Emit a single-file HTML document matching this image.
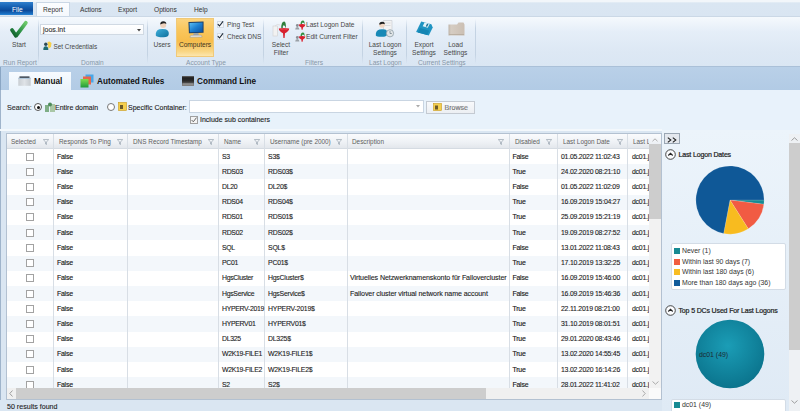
<!DOCTYPE html>
<html><head><meta charset="utf-8"><style>
*{box-sizing:border-box;margin:0;padding:0}
html,body{width:800px;height:411px;overflow:hidden;background:#dae6f2;font-family:"Liberation Sans",sans-serif;color:#222;font-size:7px}
div,span{position:absolute;white-space:nowrap}
.t{line-height:10px;height:10px}
.glabel{font-size:6.6px;color:#8797a8;line-height:9px;top:58px}
.btxt{font-size:6.6px;color:#474747;line-height:8px;text-align:center}
.sep{top:19px;width:1px;height:45px;background:linear-gradient(rgba(190,205,222,0),#c4d3e3 20%,#c4d3e3 80%,rgba(190,205,222,0))}
.mt{top:5px;font-size:6.6px;color:#333;line-height:9px}
.tt{top:77px;font-size:8.2px;font-weight:bold;color:#111;line-height:10px}
.hd{top:137px;font-size:6.4px;color:#606060;line-height:9px}
.fi{top:139px;width:6px;height:6px}
.cell{font-size:6.9px;color:#1a1a1a;line-height:10px;letter-spacing:-0.22px;-webkit-text-stroke:0.1px #1a1a1a}
.b{-webkit-text-stroke:0.15px #1a1a1a}
.st{font-size:7px;color:#1e1e1e;line-height:10px;-webkit-text-stroke:0.12px #1e1e1e}
.cb{width:8px;height:8px;border:1px solid #a2a2a2;background:#fff}
.lg{font-size:6.9px;color:#333;line-height:9px}
.sw{width:6px;height:6px}
</style></head><body>
<div style="left:0;top:0;width:800px;height:17px;background:linear-gradient(#f2f6fa,#f2f6fa 1.5px,#dae6f2 3px,#d9e5f2)"></div>
<div style="left:0;top:2px;width:33px;height:13px;background:linear-gradient(#2f7fcc,#1661b3 35%,#0b4a9a 65%,#1a6fc2 90%,#2a86d6);"></div>
<div class="mt" style="left:12px;color:#fff">File</div>
<div style="left:36px;top:2px;width:34px;height:15px;background:linear-gradient(#fbfdff,#f4f8fc);border:1px solid #cad7e5;border-bottom:none"></div>
<div class="mt" style="left:43px">Report</div>
<div class="mt" style="left:80px">Actions</div>
<div class="mt" style="left:118px">Export</div>
<div class="mt" style="left:154px">Options</div>
<div class="mt" style="left:194px">Help</div>
<div style="left:0;top:16px;width:800px;height:51px;background:linear-gradient(#f5f9fd,#e5eef8 30%,#dde8f4 70%,#dae6f3);border-top:1px solid #cbd8e6;border-bottom:1px solid #aac0d8"></div>
<div class="sep" style="left:38px"></div>
<div class="sep" style="left:147px"></div>
<div class="sep" style="left:263px"></div>
<div class="sep" style="left:362px"></div>
<div class="sep" style="left:406px"></div>
<div class="sep" style="left:475px"></div>
<div class="glabel" style="left:3px">Run Report</div>
<div class="glabel" style="left:81px">Domain</div>
<div class="glabel" style="left:186px">Account Type</div>
<div class="glabel" style="left:305px">Filters</div>
<div class="glabel" style="left:369px">Last Logon</div>
<div class="glabel" style="left:418px">Current Settings</div>
<svg style="position:absolute;left:9px;top:20px" width="20" height="19" viewBox="0 0 20 19"><defs><linearGradient id="gck" x1="0" y1="1" x2="1" y2="0"><stop offset="0" stop-color="#0f5a2a"/><stop offset="0.45" stop-color="#2a8f45"/><stop offset="1" stop-color="#6cc96a"/></linearGradient></defs><path d="M3 10 L7 15.8 L16.8 2.8" fill="none" stroke="url(#gck)" stroke-width="3.8" stroke-linecap="round" stroke-linejoin="round"/></svg>
<div class="btxt" style="left:9px;top:41px;width:20px">Start</div>
<div style="left:40px;top:23.7px;width:103.5px;height:11px;background:linear-gradient(#ffffff,#f7f9fc);border:1px solid #d0d9e3"></div>
<div class="cell" style="left:43px;top:24.5px;font-size:7px;color:#333;letter-spacing:0">joos.int</div>
<svg style="position:absolute;left:137px;top:28.5px" width="4" height="3"><path d="M0 0H4L2 2.5Z" fill="#444"/></svg>
<svg style="position:absolute;left:43px;top:41px" width="9" height="9" viewBox="0 0 9 9"><path d="M4.5 1 L6.5 0.5 L8.5 2 L8 6 L5.5 7.5Z" fill="#f6cf4a"/><circle cx="2.8" cy="3.3" r="1.7" fill="#2d4a55"/><path d="M0.3 9 Q0.2 5.3 2.8 5.3 Q5.4 5.3 5.3 9Z" fill="#1f6b70"/></svg>
<div class="btxt" style="left:53.5px;top:42.5px;text-align:left;font-size:6.4px">Set Credentials</div>
<svg style="position:absolute;left:155px;top:20px" width="15" height="18" viewBox="0 0 15 18"><defs><linearGradient id="ub" x1="0" y1="0" x2="1" y2="1"><stop offset="0" stop-color="#3fb0dc"/><stop offset="1" stop-color="#0e6f9c"/></linearGradient></defs><circle cx="8.2" cy="5" r="3" fill="#eed2bd"/><path d="M5.2 4.6 Q5.3 1.3 8.3 1.3 Q11.3 1.3 11.3 4 Q9.5 2.8 7.8 3.6 Q6.5 4.3 5.2 4.6Z" fill="#222"/><path d="M6.8 8.3 L9.6 8.3 L9 10 H7.5Z" fill="#f4f4f4"/><path d="M0.8 15.5 Q0.3 10.5 4.5 9.3 Q7.5 8.6 10.5 9.3 Q14 10.3 13.8 14 Q13.5 17.5 8 17.3 Q1.5 17.3 0.8 15.5Z" fill="url(#ub)"/></svg>
<div class="btxt" style="left:152px;top:41px;width:20px">Users</div>
<div style="left:176px;top:18px;width:38px;height:39px;background:linear-gradient(#fbd37e,#f9c65c 30%,#f7bd4c 60%,#f9d685 88%,#fce6ad);border:1px solid #f0c978"></div>
<svg style="position:absolute;left:187px;top:20.5px" width="18" height="17" viewBox="0 0 19 18"><defs><linearGradient id="scr" x1="0" y1="0" x2="1" y2="1"><stop offset="0" stop-color="#5cc0f5"/><stop offset="0.5" stop-color="#1d7fd0"/><stop offset="1" stop-color="#0b4fa0"/></linearGradient></defs><path d="M1.5 1 L17.5 0.5 L17.5 12.5 L2 13 Z" fill="#1b3d66"/><path d="M2.6 2 L16.5 1.6 L16.5 11.6 L3 12 Z" fill="url(#scr)"/><path d="M7 13 L12 12.8 L12.5 15 L6.5 15.2Z" fill="#9aa3ad"/><path d="M4 15.2 L15 15 L16 17 L3 17.2Z" fill="#e6e6e6" stroke="#8d939a" stroke-width="0.5"/></svg>
<div class="btxt" style="left:176px;top:41px;width:38px;color:#3d3420">Computers</div>
<div class="cb" style="left:216.5px;top:21px;width:7px;height:7px;border-color:#d3dbe5;background:#f4f7fa"></div>
<svg style="position:absolute;left:217px;top:21px" width="7" height="6" viewBox="0 0 7 6"><path d="M0.8 3.2 L2.5 5 L6 0.4" fill="none" stroke="#1d2a3a" stroke-width="1.1"/></svg>
<div class="btxt" style="left:227px;top:21px;text-align:left">Ping Test</div>
<div class="cb" style="left:216.5px;top:33px;width:7px;height:7px;border-color:#d3dbe5;background:#f4f7fa"></div>
<svg style="position:absolute;left:217px;top:33px" width="7" height="6" viewBox="0 0 7 6"><path d="M0.8 3.2 L2.5 5 L6 0.4" fill="none" stroke="#1d2a3a" stroke-width="1.1"/></svg>
<div class="btxt" style="left:227px;top:33px;text-align:left">Check DNS</div>
<svg style="position:absolute;left:271px;top:20px" width="20" height="19" viewBox="0 0 20 19"><rect x="2" y="6" width="4.5" height="10" fill="#f2f2f2" stroke="#cfcfcf" stroke-width="0.6"/><path d="M4 6 Q6 3.5 9 5" fill="none" stroke="#d8d8d8" stroke-width="0.8"/><path d="M10.3 8.5 Q10 2 13.2 1.6 Q15.3 2 14.8 8.5 Q14 5 12.6 5.2 Q11.5 5.8 11.8 8.5Z" fill="#2f7f3c"/><path d="M7.8 8.6 Q13 7.2 18.2 8.6 Q18 11.5 14 13.2 L13.6 18 L12.4 18 L12 13.2 Q8 11.5 7.8 8.6Z" fill="#d8202e"/><path d="M9.5 9.3 Q13 8.6 16.5 9.3" fill="none" stroke="#f06a70" stroke-width="0.6"/></svg>
<div class="btxt" style="left:270px;top:41px;width:22px">Select</div>
<div class="btxt" style="left:270px;top:48.5px;width:22px">Filter</div>
<svg style="position:absolute;left:295px;top:20px" width="11" height="10" viewBox="0 0 11 10"><circle cx="2.3" cy="5.5" r="1.4" fill="#8a8f95"/><path d="M0.2 9.6 Q0.2 7 2.3 7 Q4.4 7 4.4 9.6Z" fill="#9aa0a6"/><path d="M5.5 4.5 Q5.6 0.6 8 0.5 Q9.8 0.8 9.6 4.3 Q8.8 2.4 7.8 2.5 Q6.8 2.8 6.8 4.5Z" fill="#2f8f3f"/><path d="M3.6 4.5 Q7 3.6 10.4 4.5 Q10.2 6.6 8 7.5 L7.6 9.8 L6.6 9.8 L6.3 7.5 Q3.8 6.6 3.6 4.5Z" fill="#d8202e"/></svg>
<div class="btxt" style="left:306px;top:21px;text-align:left">Last Logon Date</div>
<svg style="position:absolute;left:295px;top:32px" width="11" height="10" viewBox="0 0 11 10"><circle cx="2.3" cy="5.5" r="1.4" fill="#8a8f95"/><path d="M0.2 9.6 Q0.2 7 2.3 7 Q4.4 7 4.4 9.6Z" fill="#9aa0a6"/><path d="M5.5 4.5 Q5.6 0.6 8 0.5 Q9.8 0.8 9.6 4.3 Q8.8 2.4 7.8 2.5 Q6.8 2.8 6.8 4.5Z" fill="#2f8f3f"/><path d="M3.6 4.5 Q7 3.6 10.4 4.5 Q10.2 6.6 8 7.5 L7.6 9.8 L6.6 9.8 L6.3 7.5 Q3.8 6.6 3.6 4.5Z" fill="#d8202e"/></svg>
<div class="btxt" style="left:306px;top:33px;text-align:left">Edit Current Filter</div>
<svg style="position:absolute;left:375px;top:19px" width="20" height="19" viewBox="0 0 20 19"><path d="M8.5 1.5 H17 V16 H8.5Z" fill="#f3f3f3" stroke="#c9cdd2" stroke-width="0.7"/><path d="M10 4 H15.5 M10 6.5 H15.5" stroke="#c9cdd2" stroke-width="0.6"/><circle cx="7" cy="6" r="2.8" fill="#f0d6c2"/><path d="M4.2 5.6 Q4.3 2.8 7.2 2.8 Q9.8 2.8 9.8 5.2 Q8.2 4.3 6.6 4.9 Q5.4 5.4 4.2 5.6Z" fill="#1f1f1f"/><path d="M0.8 16.5 Q0.5 11.5 4.5 10.4 Q7.5 9.8 10.2 10.6 Q13 11.8 12.2 15.2 Q11.5 18 6.5 17.8 Q1.2 17.8 0.8 16.5Z" fill="#1889b6"/><circle cx="15" cy="14.3" r="3.6" fill="#e2e6e8" stroke="#8fa0a8" stroke-width="0.8"/><path d="M15 12 V14.5 H16.8" fill="none" stroke="#6a7a82" stroke-width="0.7"/></svg>
<div class="btxt" style="left:366px;top:41px;width:38px">Last Logon</div>
<div class="btxt" style="left:366px;top:48.5px;width:38px">Settings</div>
<svg style="position:absolute;left:414px;top:20px" width="22" height="18" viewBox="0 0 22 18"><g transform="translate(11,8.5) rotate(16) skewX(-10) scale(0.88) translate(-7.5,-6.5)"><path d="M0 0 H12 L15 3 V13 H0Z" fill="#1f94c2"/><rect x="4" y="0" width="6" height="4.8" fill="#e4f3f9"/><rect x="7.2" y="0.8" width="1.7" height="3.2" fill="#176f93"/><rect x="2" y="7.5" width="11" height="5.5" fill="#1585b3"/></g></svg>
<div class="btxt" style="left:410px;top:41px;width:28px">Export</div>
<div class="btxt" style="left:410px;top:48.5px;width:28px">Settings</div>
<svg style="position:absolute;left:448px;top:22px" width="17" height="14" viewBox="0 0 17 14"><defs><linearGradient id="ld" x1="0" y1="0" x2="1" y2="0"><stop offset="0" stop-color="#bdb2a6"/><stop offset="0.15" stop-color="#d6cdc3"/><stop offset="1" stop-color="#cbbfb3"/></linearGradient></defs><path d="M0.5 2.5 H9 L10.5 0.5 H15.5 L16.5 2.5 V13.5 H0.5Z" fill="url(#ld)"/><path d="M1 12.5 H16" stroke="#b5a99c" stroke-width="0.8"/></svg>
<div class="btxt" style="left:442px;top:41px;width:27px">Load</div>
<div class="btxt" style="left:442px;top:48.5px;width:27px">Settings</div>
<div style="left:0;top:67px;width:800px;height:23px;background:linear-gradient(#b9d0e8,#b2cbe5)"></div>
<div style="left:0;top:67px;width:1px;height:23px;background:#8aa6c4"></div>
<div style="left:9px;top:72px;width:61.5px;height:18px;background:linear-gradient(#f7fbff,#eaf3fb)"></div>
<svg style="position:absolute;left:17.5px;top:76px" width="13" height="10" viewBox="0 0 13 10"><defs><linearGradient id="mi" x1="0" y1="0" x2="1" y2="0"><stop offset="0" stop-color="#c9ced3"/><stop offset="0.5" stop-color="#dfe3e7"/><stop offset="1" stop-color="#c6cbd0"/></linearGradient></defs><rect x="0.3" y="1.5" width="12.4" height="8.3" fill="url(#mi)"/><rect x="1.5" y="0.3" width="10" height="1.8" fill="#4d5863"/><rect x="0.3" y="2.1" width="12.4" height="0.8" fill="#a9c4dc"/></svg>
<div class="tt" style="left:34px">Manual</div>
<svg style="position:absolute;left:80px;top:74px" width="14" height="14" viewBox="0 0 14 14"><defs><linearGradient id="gc" x1="0" y1="0" x2="0" y2="1"><stop offset="0" stop-color="#7fdc4e"/><stop offset="1" stop-color="#1f9a3a"/></linearGradient></defs><rect x="5.5" y="0.5" width="8" height="8" fill="#4aa6e6"/><rect x="3" y="2.5" width="8" height="8" fill="#e8664a"/><rect x="0.5" y="5" width="8" height="8.5" fill="url(#gc)"/></svg>
<div class="tt" style="left:97px">Automated Rules</div>
<svg style="position:absolute;left:182px;top:76px" width="12" height="10" viewBox="0 0 12 10"><defs><linearGradient id="cl" x1="0" y1="0" x2="0" y2="1"><stop offset="0" stop-color="#1a1a1a"/><stop offset="0.5" stop-color="#2a2a2a"/><stop offset="1" stop-color="#8a8a8a"/></linearGradient></defs><rect x="0" y="0" width="12" height="10" fill="url(#cl)"/><rect x="0.5" y="7.5" width="11" height="1" fill="#c8c8c8" opacity="0.7"/><rect x="0" y="0" width="12" height="1.2" fill="#555"/></svg>
<div class="tt" style="left:197px">Command Line</div>
<div style="left:0;top:90px;width:800px;height:40px;background:#e8f2fb"></div>
<div style="left:0;top:90px;width:1px;height:310px;background:#9fb4cb"></div>
<div style="left:0;top:129px;width:662px;height:2px;background:#f3f8fc"></div>
<div class="st" style="left:7px;top:102.7px;color:#333;font-size:7.2px">Search:</div>
<div style="left:34px;top:103px;width:8px;height:8px;border:1px solid #555;border-radius:50%;background:#fff"></div>
<div style="left:36.5px;top:105.5px;width:3px;height:3px;border-radius:50%;background:#111"></div>
<svg style="position:absolute;left:45px;top:102px" width="10" height="10" viewBox="0 0 10 10"><rect x="0" y="3" width="4" height="7" fill="#7fae86"/><rect x="5" y="2" width="5" height="8" fill="#a9c7a6"/><circle cx="5" cy="2.5" r="2" fill="#4e8b5a"/></svg>
<div class="st" style="left:55px;top:102.5px">Entire domain</div>
<div style="left:107px;top:103px;width:8px;height:8px;border:1px solid #777;border-radius:50%;background:#fff"></div>
<svg style="position:absolute;left:118px;top:102px" width="9" height="9" viewBox="0 0 9 9"><rect x="0.5" y="0.5" width="8" height="8" fill="#f5cf4d" stroke="#c89a1d" stroke-width="0.6"/><rect x="2" y="3" width="3" height="4" fill="#6d5a2a"/></svg>
<div class="st" style="left:128px;top:102.5px">Specific Container:</div>
<div style="left:189px;top:100px;width:235px;height:13px;background:#fff;border:1px solid #c9d5e2"></div>
<svg style="position:absolute;left:416px;top:105px" width="4" height="3"><path d="M0 0H4L2 2.5Z" fill="#aaa"/></svg>
<div style="left:426px;top:100.5px;width:49px;height:13px;background:linear-gradient(#f8f9fb,#eceff3);border:1px solid #c4cad2"></div>
<svg style="position:absolute;left:433px;top:103px" width="9" height="8" viewBox="0 0 9 8"><rect x="0.5" y="0.5" width="8" height="7" fill="#f5cf4d" stroke="#c89a1d" stroke-width="0.6"/><rect x="2" y="2.5" width="3" height="4" fill="#6d5a2a"/></svg>
<div class="st" style="left:444.5px;top:102.7px;color:#8f8f8f">Browse</div>
<div style="left:190px;top:116px;width:8px;height:8px;border:1px solid #a0a0a0;background:#f4f4f4"></div>
<svg style="position:absolute;left:191px;top:117px" width="6" height="6" viewBox="0 0 6 6"><path d="M0.6 3 L2.3 4.8 L5.5 0.6" fill="none" stroke="#666" stroke-width="1"/></svg>
<div class="st" style="left:200px;top:115px">Include sub containers</div>
<div style="left:6px;top:133px;width:656px;height:267px;background:#fff;border:1px solid #b3c1d1"></div>
<div style="left:7px;top:134px;width:642px;height:15px;background:linear-gradient(#fafbfd,#eef1f5 60%,#e3e7ec);border-bottom:1px solid #d5dbe2"></div>
<div style="left:7px;top:149.00px;width:642px;height:15.22px;background:#ffffff"></div>
<div style="left:7px;top:164.22px;width:642px;height:15.22px;background:#f3f7fb"></div>
<div style="left:7px;top:179.44px;width:642px;height:15.22px;background:#ffffff"></div>
<div style="left:7px;top:194.66px;width:642px;height:15.22px;background:#f3f7fb"></div>
<div style="left:7px;top:209.88px;width:642px;height:15.22px;background:#ffffff"></div>
<div style="left:7px;top:225.10px;width:642px;height:15.22px;background:#f3f7fb"></div>
<div style="left:7px;top:240.32px;width:642px;height:15.22px;background:#ffffff"></div>
<div style="left:7px;top:255.54px;width:642px;height:15.22px;background:#f3f7fb"></div>
<div style="left:7px;top:270.76px;width:642px;height:15.22px;background:#ffffff"></div>
<div style="left:7px;top:285.98px;width:642px;height:15.22px;background:#f3f7fb"></div>
<div style="left:7px;top:301.20px;width:642px;height:15.22px;background:#ffffff"></div>
<div style="left:7px;top:316.42px;width:642px;height:15.22px;background:#f3f7fb"></div>
<div style="left:7px;top:331.64px;width:642px;height:15.22px;background:#ffffff"></div>
<div style="left:7px;top:346.86px;width:642px;height:15.22px;background:#f3f7fb"></div>
<div style="left:7px;top:362.08px;width:642px;height:15.22px;background:#ffffff"></div>
<div style="left:7px;top:377.30px;width:642px;height:15.22px;background:#f3f7fb"></div>
<div style="left:53.0px;top:134px;width:1px;height:254px;background:#d8dee5"></div>
<div style="left:127.0px;top:134px;width:1px;height:254px;background:#d8dee5"></div>
<div style="left:218.0px;top:134px;width:1px;height:254px;background:#d8dee5"></div>
<div style="left:264.0px;top:134px;width:1px;height:254px;background:#d8dee5"></div>
<div style="left:347.0px;top:134px;width:1px;height:254px;background:#d8dee5"></div>
<div style="left:509.0px;top:134px;width:1px;height:254px;background:#d8dee5"></div>
<div style="left:557.0px;top:134px;width:1px;height:254px;background:#d8dee5"></div>
<div style="left:627.0px;top:134px;width:1px;height:254px;background:#d8dee5"></div>
<div class="hd" style="left:11px">Selected</div>
<div class="hd" style="left:59px">Responds To Ping</div>
<div class="hd" style="left:133px">DNS Record Timestamp</div>
<div class="hd" style="left:224px">Name</div>
<div class="hd" style="left:270px">Username (pre 2000)</div>
<div class="hd" style="left:352px">Description</div>
<div class="hd" style="left:515px">Disabled</div>
<div class="hd" style="left:563px">Last Logon Date</div>
<div class="hd" style="left:633px">Last L</div>
<svg style="position:absolute;left:42.5px;top:139px" width="6" height="6" viewBox="0 0 6 6"><path d="M0.3 0.5 H5.7 L3.5 3 V5.5 L2.5 5 V3Z" fill="none" stroke="#9aa5b0" stroke-width="0.7"/></svg>
<svg style="position:absolute;left:116.5px;top:139px" width="6" height="6" viewBox="0 0 6 6"><path d="M0.3 0.5 H5.7 L3.5 3 V5.5 L2.5 5 V3Z" fill="none" stroke="#9aa5b0" stroke-width="0.7"/></svg>
<svg style="position:absolute;left:208px;top:139px" width="6" height="6" viewBox="0 0 6 6"><path d="M0.3 0.5 H5.7 L3.5 3 V5.5 L2.5 5 V3Z" fill="none" stroke="#9aa5b0" stroke-width="0.7"/></svg>
<svg style="position:absolute;left:253.5px;top:139px" width="6" height="6" viewBox="0 0 6 6"><path d="M0.3 0.5 H5.7 L3.5 3 V5.5 L2.5 5 V3Z" fill="none" stroke="#9aa5b0" stroke-width="0.7"/></svg>
<svg style="position:absolute;left:335.5px;top:139px" width="6" height="6" viewBox="0 0 6 6"><path d="M0.3 0.5 H5.7 L3.5 3 V5.5 L2.5 5 V3Z" fill="none" stroke="#9aa5b0" stroke-width="0.7"/></svg>
<svg style="position:absolute;left:497.5px;top:139px" width="6" height="6" viewBox="0 0 6 6"><path d="M0.3 0.5 H5.7 L3.5 3 V5.5 L2.5 5 V3Z" fill="none" stroke="#9aa5b0" stroke-width="0.7"/></svg>
<svg style="position:absolute;left:546px;top:139px" width="6" height="6" viewBox="0 0 6 6"><path d="M0.3 0.5 H5.7 L3.5 3 V5.5 L2.5 5 V3Z" fill="none" stroke="#9aa5b0" stroke-width="0.7"/></svg>
<svg style="position:absolute;left:617px;top:139px" width="6" height="6" viewBox="0 0 6 6"><path d="M0.3 0.5 H5.7 L3.5 3 V5.5 L2.5 5 V3Z" fill="none" stroke="#9aa5b0" stroke-width="0.7"/></svg>
<div class="cb" style="left:25.5px;top:152.60px"></div>
<div class="cell b" style="left:57px;top:151.60px">False</div>
<div class="cell" style="left:222px;top:151.60px;letter-spacing:-0.3px">S3</div>
<div class="cell" style="left:268px;top:151.60px">S3$</div>
<div class="cell b" style="left:512.5px;top:151.60px">False</div>
<div class="cell" style="left:561px;top:151.60px">01.05.2022 11:02:43</div>
<div style="left:629px;top:151.60px;width:20px;height:12px;overflow:hidden"><div class="cell" style="left:3px;top:0">dc01.joos.int</div></div>
<div class="cb" style="left:25.5px;top:167.82px"></div>
<div class="cell b" style="left:57px;top:166.82px">False</div>
<div class="cell" style="left:222px;top:166.82px;letter-spacing:-0.3px">RDS03</div>
<div class="cell" style="left:268px;top:166.82px">RDS03$</div>
<div class="cell b" style="left:512.5px;top:166.82px">True</div>
<div class="cell" style="left:561px;top:166.82px">24.02.2020 08:21:10</div>
<div style="left:629px;top:166.82px;width:20px;height:12px;overflow:hidden"><div class="cell" style="left:3px;top:0">dc01.joos.int</div></div>
<div class="cb" style="left:25.5px;top:183.04px"></div>
<div class="cell b" style="left:57px;top:182.04px">False</div>
<div class="cell" style="left:222px;top:182.04px;letter-spacing:-0.3px">DL20</div>
<div class="cell" style="left:268px;top:182.04px">DL20$</div>
<div class="cell b" style="left:512.5px;top:182.04px">False</div>
<div class="cell" style="left:561px;top:182.04px">01.05.2022 11:02:09</div>
<div style="left:629px;top:182.04px;width:20px;height:12px;overflow:hidden"><div class="cell" style="left:3px;top:0">dc01.joos.int</div></div>
<div class="cb" style="left:25.5px;top:198.26px"></div>
<div class="cell b" style="left:57px;top:197.26px">False</div>
<div class="cell" style="left:222px;top:197.26px;letter-spacing:-0.3px">RDS04</div>
<div class="cell" style="left:268px;top:197.26px">RDS04$</div>
<div class="cell b" style="left:512.5px;top:197.26px">True</div>
<div class="cell" style="left:561px;top:197.26px">16.09.2019 15:04:27</div>
<div style="left:629px;top:197.26px;width:20px;height:12px;overflow:hidden"><div class="cell" style="left:3px;top:0">dc01.joos.int</div></div>
<div class="cb" style="left:25.5px;top:213.48px"></div>
<div class="cell b" style="left:57px;top:212.48px">False</div>
<div class="cell" style="left:222px;top:212.48px;letter-spacing:-0.3px">RDS01</div>
<div class="cell" style="left:268px;top:212.48px">RDS01$</div>
<div class="cell b" style="left:512.5px;top:212.48px">True</div>
<div class="cell" style="left:561px;top:212.48px">25.09.2019 15:21:19</div>
<div style="left:629px;top:212.48px;width:20px;height:12px;overflow:hidden"><div class="cell" style="left:3px;top:0">dc01.joos.int</div></div>
<div class="cb" style="left:25.5px;top:228.70px"></div>
<div class="cell b" style="left:57px;top:227.70px">False</div>
<div class="cell" style="left:222px;top:227.70px;letter-spacing:-0.3px">RDS02</div>
<div class="cell" style="left:268px;top:227.70px">RDS02$</div>
<div class="cell b" style="left:512.5px;top:227.70px">True</div>
<div class="cell" style="left:561px;top:227.70px">19.09.2019 08:27:52</div>
<div style="left:629px;top:227.70px;width:20px;height:12px;overflow:hidden"><div class="cell" style="left:3px;top:0">dc01.joos.int</div></div>
<div class="cb" style="left:25.5px;top:243.92px"></div>
<div class="cell b" style="left:57px;top:242.92px">False</div>
<div class="cell" style="left:222px;top:242.92px;letter-spacing:-0.3px">SQL</div>
<div class="cell" style="left:268px;top:242.92px">SQL$</div>
<div class="cell b" style="left:512.5px;top:242.92px">False</div>
<div class="cell" style="left:561px;top:242.92px">13.01.2022 11:08:43</div>
<div style="left:629px;top:242.92px;width:20px;height:12px;overflow:hidden"><div class="cell" style="left:3px;top:0">dc01.joos.int</div></div>
<div class="cb" style="left:25.5px;top:259.14px"></div>
<div class="cell b" style="left:57px;top:258.14px">False</div>
<div class="cell" style="left:222px;top:258.14px;letter-spacing:-0.3px">PC01</div>
<div class="cell" style="left:268px;top:258.14px">PC01$</div>
<div class="cell b" style="left:512.5px;top:258.14px">True</div>
<div class="cell" style="left:561px;top:258.14px">17.10.2019 13:32:25</div>
<div style="left:629px;top:258.14px;width:20px;height:12px;overflow:hidden"><div class="cell" style="left:3px;top:0">dc01.joos.int</div></div>
<div class="cb" style="left:25.5px;top:274.36px"></div>
<div class="cell b" style="left:57px;top:273.36px">False</div>
<div class="cell" style="left:222px;top:273.36px;letter-spacing:-0.3px">HgsCluster</div>
<div class="cell" style="left:268px;top:273.36px">HgsCluster$</div>
<div class="cell" style="left:350px;top:273.36px;font-size:7.1px;letter-spacing:-0.1px">Virtuelles Netzwerknamenskonto für Failovercluster</div>
<div class="cell b" style="left:512.5px;top:273.36px">False</div>
<div class="cell" style="left:561px;top:273.36px">16.09.2019 15:46:00</div>
<div style="left:629px;top:273.36px;width:20px;height:12px;overflow:hidden"><div class="cell" style="left:3px;top:0">dc01.joos.int</div></div>
<div class="cb" style="left:25.5px;top:289.58px"></div>
<div class="cell b" style="left:57px;top:288.58px">False</div>
<div class="cell" style="left:222px;top:288.58px;letter-spacing:-0.3px">HgsService</div>
<div class="cell" style="left:268px;top:288.58px">HgsService$</div>
<div class="cell" style="left:350px;top:288.58px;font-size:7.1px;letter-spacing:-0.1px">Failover cluster virtual network name account</div>
<div class="cell b" style="left:512.5px;top:288.58px">False</div>
<div class="cell" style="left:561px;top:288.58px">16.09.2019 15:46:36</div>
<div style="left:629px;top:288.58px;width:20px;height:12px;overflow:hidden"><div class="cell" style="left:3px;top:0">dc01.joos.int</div></div>
<div class="cb" style="left:25.5px;top:304.80px"></div>
<div class="cell b" style="left:57px;top:303.80px">False</div>
<div class="cell" style="left:222px;top:303.80px;letter-spacing:-0.3px">HYPERV-2019</div>
<div class="cell" style="left:268px;top:303.80px">HYPERV-2019$</div>
<div class="cell b" style="left:512.5px;top:303.80px">True</div>
<div class="cell" style="left:561px;top:303.80px">22.11.2019 08:21:00</div>
<div style="left:629px;top:303.80px;width:20px;height:12px;overflow:hidden"><div class="cell" style="left:3px;top:0">dc01.joos.int</div></div>
<div class="cb" style="left:25.5px;top:320.02px"></div>
<div class="cell b" style="left:57px;top:319.02px">False</div>
<div class="cell" style="left:222px;top:319.02px;letter-spacing:-0.3px">HYPERV01</div>
<div class="cell" style="left:268px;top:319.02px">HYPERV01$</div>
<div class="cell b" style="left:512.5px;top:319.02px">True</div>
<div class="cell" style="left:561px;top:319.02px">31.10.2019 08:01:51</div>
<div style="left:629px;top:319.02px;width:20px;height:12px;overflow:hidden"><div class="cell" style="left:3px;top:0">dc01.joos.int</div></div>
<div class="cb" style="left:25.5px;top:335.24px"></div>
<div class="cell b" style="left:57px;top:334.24px">False</div>
<div class="cell" style="left:222px;top:334.24px;letter-spacing:-0.3px">DL325</div>
<div class="cell" style="left:268px;top:334.24px">DL325$</div>
<div class="cell b" style="left:512.5px;top:334.24px">True</div>
<div class="cell" style="left:561px;top:334.24px">29.01.2020 08:43:46</div>
<div style="left:629px;top:334.24px;width:20px;height:12px;overflow:hidden"><div class="cell" style="left:3px;top:0">dc01.joos.int</div></div>
<div class="cb" style="left:25.5px;top:350.46px"></div>
<div class="cell b" style="left:57px;top:349.46px">False</div>
<div class="cell" style="left:222px;top:349.46px;letter-spacing:-0.3px">W2K19-FILE1</div>
<div class="cell" style="left:268px;top:349.46px">W2K19-FILE1$</div>
<div class="cell b" style="left:512.5px;top:349.46px">True</div>
<div class="cell" style="left:561px;top:349.46px">13.02.2020 14:55:45</div>
<div style="left:629px;top:349.46px;width:20px;height:12px;overflow:hidden"><div class="cell" style="left:3px;top:0">dc01.joos.int</div></div>
<div class="cb" style="left:25.5px;top:365.68px"></div>
<div class="cell b" style="left:57px;top:364.68px">False</div>
<div class="cell" style="left:222px;top:364.68px;letter-spacing:-0.3px">W2K19-FILE2</div>
<div class="cell" style="left:268px;top:364.68px">W2K19-FILE2$</div>
<div class="cell b" style="left:512.5px;top:364.68px">True</div>
<div class="cell" style="left:561px;top:364.68px">13.02.2020 16:14:26</div>
<div style="left:629px;top:364.68px;width:20px;height:12px;overflow:hidden"><div class="cell" style="left:3px;top:0">dc01.joos.int</div></div>
<div class="cb" style="left:25.5px;top:380.90px"></div>
<div class="cell b" style="left:57px;top:379.90px">False</div>
<div class="cell" style="left:222px;top:379.90px;letter-spacing:-0.3px">S2</div>
<div class="cell" style="left:268px;top:379.90px">S2$</div>
<div class="cell b" style="left:512.5px;top:379.90px">False</div>
<div class="cell" style="left:561px;top:379.90px">28.01.2022 11:41:02</div>
<div style="left:629px;top:379.90px;width:20px;height:12px;overflow:hidden"><div class="cell" style="left:3px;top:0">dc01.joos.int</div></div>
<div style="left:648.5px;top:149px;width:12.5px;height:250px;background:#f2f2f2"></div>
<div style="left:648.5px;top:134px;width:12.5px;height:15px;background:linear-gradient(#fafbfd,#eef1f5 60%,#e6e9ee)"></div>
<svg style="position:absolute;left:652px;top:138px" width="6" height="4"><path d="M0.5 3.2 L3 0.8 L5.5 3.2" fill="none" stroke="#999" stroke-width="0.8"/></svg>
<div style="left:648.5px;top:144px;width:12.5px;height:75px;background:#cdcdcd"></div>
<svg style="position:absolute;left:652px;top:381px" width="7" height="4"><path d="M0.5 0.5 L3.5 3.2 L6.5 0.5" fill="none" stroke="#999" stroke-width="0.8"/></svg>
<div style="left:7px;top:388px;width:641.5px;height:11px;background:#f0f0f0"></div>
<div style="left:16px;top:388px;width:470px;height:11px;background:#cdcdcd"></div>
<svg style="position:absolute;left:9px;top:390px" width="4" height="7"><path d="M3.5 0.5 L0.8 3.5 L3.5 6.5" fill="none" stroke="#888" stroke-width="0.8"/></svg>
<svg style="position:absolute;left:642px;top:390px" width="4" height="7"><path d="M0.5 0.5 L3.2 3.5 L0.5 6.5" fill="none" stroke="#999" stroke-width="0.8"/></svg>
<div style="left:648.5px;top:388px;width:12.5px;height:11px;background:#fafafa"></div>
<div style="left:662px;top:130px;width:138px;height:281px;background:linear-gradient(#ecf4fb,#dfeaf5)"></div>
<div style="left:664px;top:133px;width:16px;height:11px;background:#e4e8ee;border:1px solid #9aa6b3"></div>
<svg style="position:absolute;left:667px;top:136.5px" width="10" height="6" viewBox="0 0 10 6"><path d="M0.8 0.6 L3.8 3 L0.8 5.4 M5.8 0.6 L8.8 3 L5.8 5.4" fill="none" stroke="#222" stroke-width="1.1"/></svg>
<div style="left:789px;top:134px;width:11px;height:277px;background:#eef1f4"></div>
<div style="left:789px;top:143px;width:11px;height:207px;background:#cdcdcd"></div>
<svg style="position:absolute;left:791px;top:137px" width="7" height="4"><path d="M0.5 3.5 L3.5 0.8 L6.5 3.5" fill="none" stroke="#888" stroke-width="0.8"/></svg>
<svg style="position:absolute;left:791px;top:400px" width="7" height="4"><path d="M0.5 0.5 L3.5 3.2 L6.5 0.5" fill="none" stroke="#888" stroke-width="0.8"/></svg>
<svg style="position:absolute;left:665px;top:149.0px" width="11" height="11" viewBox="0 0 11 11"><circle cx="5.5" cy="5.5" r="4.8" fill="#fbfcfe" stroke="#333" stroke-width="0.9"/><path d="M3.3 6.5 L5.5 4.3 L7.7 6.5" fill="none" stroke="#222" stroke-width="1.1"/></svg>
<div class="cell" style="left:678.5px;top:150.0px;font-size:7px;color:#1a1a1a;letter-spacing:-0.15px;-webkit-text-stroke:0.2px #1a1a1a">Last Logon Dates</div>
<svg style="position:absolute;left:665px;top:304.5px" width="11" height="11" viewBox="0 0 11 11"><circle cx="5.5" cy="5.5" r="4.8" fill="#fbfcfe" stroke="#333" stroke-width="0.9"/><path d="M3.3 6.5 L5.5 4.3 L7.7 6.5" fill="none" stroke="#222" stroke-width="1.1"/></svg>
<div class="cell" style="left:678.5px;top:305.5px;font-size:7px;color:#1a1a1a;letter-spacing:-0.15px;-webkit-text-stroke:0.2px #1a1a1a">Top 5 DCs Used For Last Logons</div>
<svg style="position:absolute;left:692.9px;top:162.6px" width="74" height="74" viewBox="-37.0 -37.0 74 74"><path d="M0 0 L34.100 0.000 A34.10 34.10 0 0 1 33.831 4.274 Z" fill="#168a93" stroke="rgba(255,255,255,0.35)" stroke-width="0.4"/><path d="M0 0 L33.831 4.274 A34.10 34.10 0 0 1 18.272 28.792 Z" fill="#f15b43" stroke="rgba(255,255,255,0.35)" stroke-width="0.4"/><path d="M0 0 L18.272 28.792 A34.10 34.10 0 0 1 -6.390 33.496 Z" fill="#f8bb1f" stroke="rgba(255,255,255,0.35)" stroke-width="0.4"/><path d="M0 0 L-6.390 33.496 A34.10 34.10 0 1 1 34.100 -0.000 Z" fill="#0f5897" stroke="rgba(255,255,255,0.35)" stroke-width="0.4"/></svg>
<div style="left:671px;top:242.5px;width:115px;height:47px;background:#fff;border:1px solid #d3dce6;border-radius:2px"></div>
<div class="sw" style="left:673.8px;top:248.1px;background:#168a93"></div>
<div class="lg" style="left:682px;top:246.1px">Never (1)</div>
<div class="sw" style="left:673.8px;top:258.6px;background:#f15d3f"></div>
<div class="lg" style="left:682px;top:256.6px">Within last 90 days (7)</div>
<div class="sw" style="left:673.8px;top:269.1px;background:#f8bc22"></div>
<div class="lg" style="left:682px;top:267.1px">Within last 180 days (6)</div>
<div class="sw" style="left:673.8px;top:279.6px;background:#0f5b9b"></div>
<div class="lg" style="left:682px;top:277.6px">More than 180 days ago (36)</div>
<svg style="position:absolute;left:694px;top:318px" width="72" height="72" viewBox="0 0 72 72"><defs><radialGradient id="pg2" cx="0.47" cy="0.38" r="0.65"><stop offset="0" stop-color="#1b9db6"/><stop offset="1" stop-color="#0a728b"/></radialGradient></defs><circle cx="36" cy="36" r="34.3" fill="url(#pg2)"/></svg>
<div class="lg" style="left:699px;top:350px;color:#1b2a33">dc01 (49)</div>
<div style="left:671px;top:398.5px;width:115px;height:20px;background:#fff;border:1px solid #d3dce6;border-radius:2px"></div>
<div class="sw" style="left:673.8px;top:401.5px;background:#168a93"></div>
<div class="lg" style="left:682px;top:400px">dc01 (49)</div>
<div style="left:0;top:400px;width:662px;height:11px;background:#dae6f2"></div>
<div class="cell" style="left:7px;top:401.5px;color:#222;font-size:7.1px;letter-spacing:0">50 results found</div>
</body></html>
